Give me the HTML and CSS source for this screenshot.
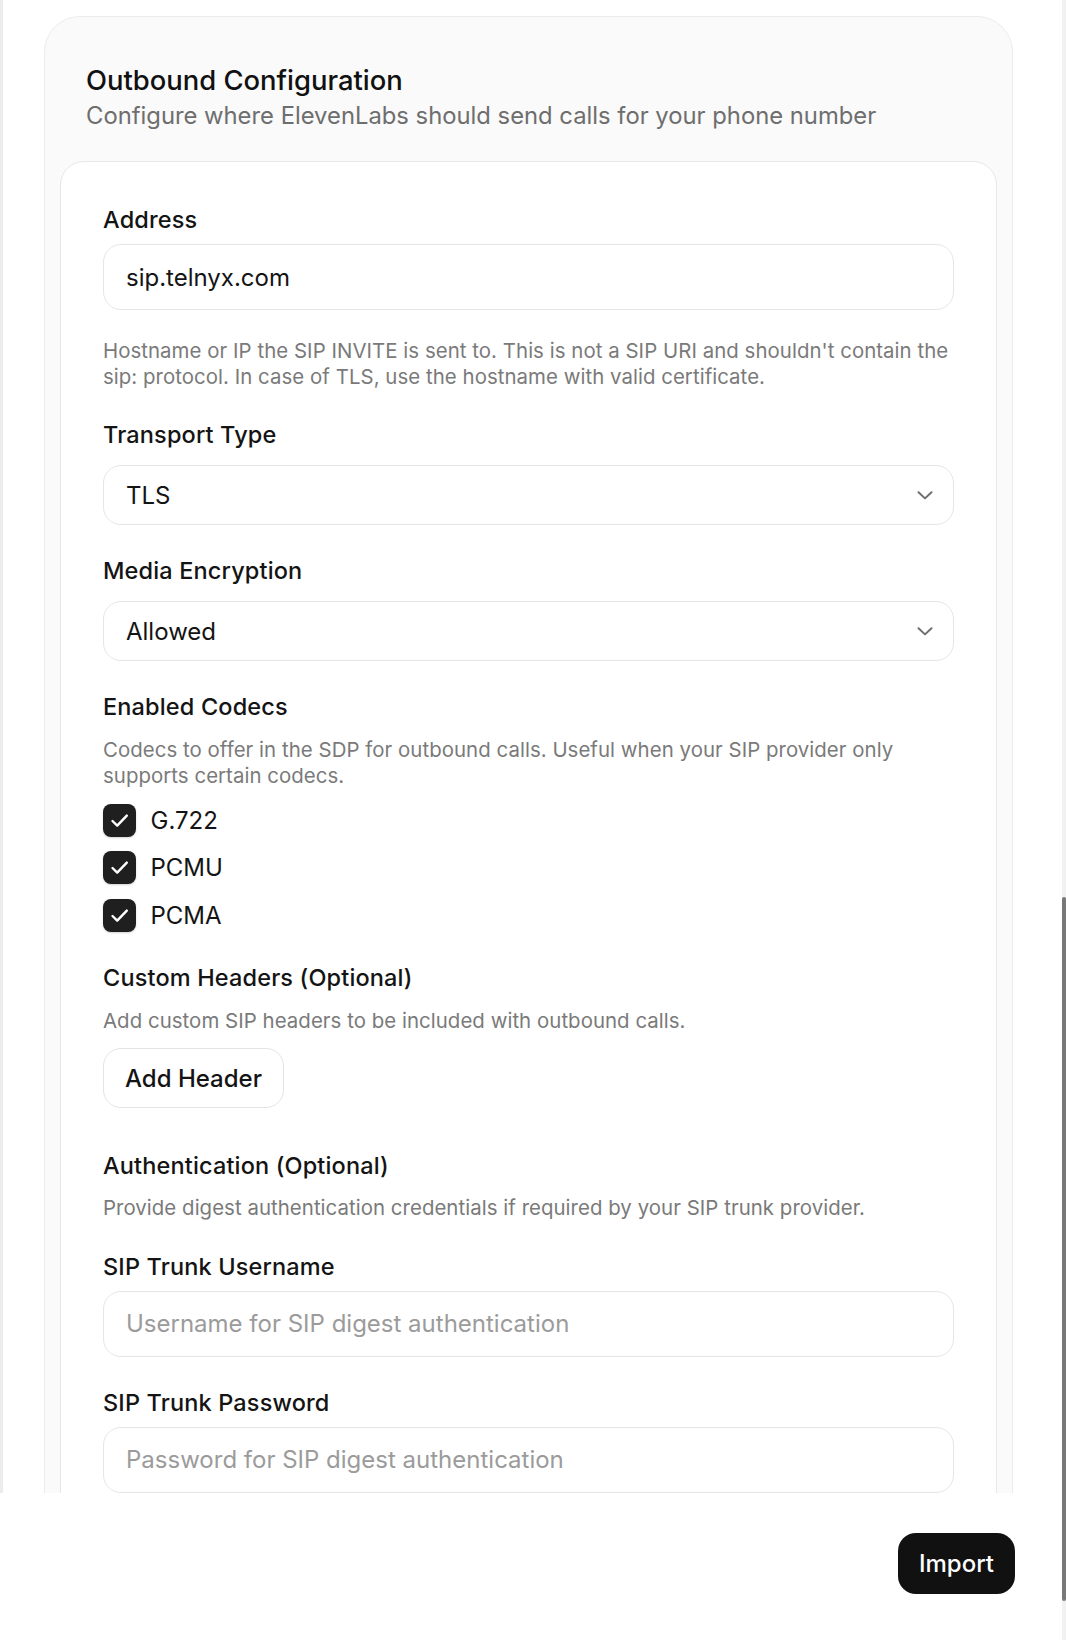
FILE: index.html
```html
<!DOCTYPE html>
<html lang="en">
<head>
<meta charset="utf-8">
<title>Outbound Configuration</title>
<link rel="stylesheet" href="styles.css">
</head>
<body>
<div class="app">
  <div class="modal">
    <div class="scroll">
      <section class="outer-card">
        <header class="card-head">
          <h2 class="title">Outbound Configuration</h2>
          <p class="subtitle">Configure where ElevenLabs should send calls for your phone number</p>
        </header>
        <div class="inner-card">
          <label class="label">Address</label>
          <input class="input gap-input" type="text" value="sip.telnyx.com">
          <p class="helper after-control">Hostname or IP the SIP INVITE is sent to. This is not a SIP URI and shouldn't contain the sip: protocol. In case of TLS, use the hostname with valid certificate.</p>

          <label class="label section">Transport Type</label>
          <button class="select gap-select" type="button"><span>TLS</span>
            <svg class="chev" width="16" height="9" viewBox="0 0 16 9"><path d="M1.5 1.2 L8 7.4 L14.5 1.2" fill="none" stroke="#6f6f6f" stroke-width="2" stroke-linecap="round" stroke-linejoin="round"/></svg>
          </button>

          <label class="label section">Media Encryption</label>
          <button class="select gap-select" type="button"><span>Allowed</span>
            <svg class="chev" width="16" height="9" viewBox="0 0 16 9"><path d="M1.5 1.2 L8 7.4 L14.5 1.2" fill="none" stroke="#6f6f6f" stroke-width="2" stroke-linecap="round" stroke-linejoin="round"/></svg>
          </button>

          <label class="label section">Enabled Codecs</label>
          <p class="helper after-label">Codecs to offer in the SDP for outbound calls. Useful when your SIP provider only supports certain codecs.</p>
          <ul class="checks">
            <li class="check-row"><span class="checkbox"><svg width="33" height="33" viewBox="0 0 33 33"><path d="M9.5 17 L14.2 21.6 L23.8 11.6" fill="none" stroke="#fff" stroke-width="2.4" stroke-linecap="round" stroke-linejoin="round"/></svg></span><span class="check-label">G.722</span></li>
            <li class="check-row"><span class="checkbox"><svg width="33" height="33" viewBox="0 0 33 33"><path d="M9.5 17 L14.2 21.6 L23.8 11.6" fill="none" stroke="#fff" stroke-width="2.4" stroke-linecap="round" stroke-linejoin="round"/></svg></span><span class="check-label">PCMU</span></li>
            <li class="check-row"><span class="checkbox"><svg width="33" height="33" viewBox="0 0 33 33"><path d="M9.5 17 L14.2 21.6 L23.8 11.6" fill="none" stroke="#fff" stroke-width="2.4" stroke-linecap="round" stroke-linejoin="round"/></svg></span><span class="check-label">PCMA</span></li>
          </ul>

          <label class="label section">Custom Headers (Optional)</label>
          <p class="helper after-label">Add custom SIP headers to be included with outbound calls.</p>
          <button class="btn-outline" type="button">Add Header</button>

          <label class="label section-lg">Authentication (Optional)</label>
          <p class="helper after-label-sm">Provide digest authentication credentials if required by your SIP trunk provider.</p>

          <label class="label section">SIP Trunk Username</label>
          <input class="input gap-input" type="text" placeholder="Username for SIP digest authentication">

          <label class="label section">SIP Trunk Password</label>
          <input class="input gap-input" type="password" placeholder="Password for SIP digest authentication">
        </div>
      </section>
    </div>
    <div class="footer">
      <button class="btn-primary" type="button">Import</button>
    </div>
  </div>
  <div class="scrollbar"><div class="thumb"></div></div>
</div>
</body>
</html>
```

FILE: styles.css
```css
* { box-sizing: border-box; }

html, body {
  margin: 0;
  padding: 0;
  background: #ffffff;
}

body {
  font-family: Inter, "Noto Sans", "Liberation Sans", sans-serif;
  color: #111111;
  width: 1066px;
  height: 1640px;
  overflow: hidden;
}

.app {
  display: flex;
  height: 1640px;
}

.modal {
  flex: 1;
  display: flex;
  flex-direction: column;
  min-width: 0;
}

.scroll {
  height: 1493px;
  overflow: hidden;
  border-left: 3px solid #ececec;
  padding: 16px 49px 0 41px;
}

.outer-card {
  background: #fafafa;
  border: 1px solid #ececec;
  border-radius: 36px;
  padding: 15px 15px 0 15px;
  min-height: 1600px;
}

.card-head {
  padding: 30px 28px 27px 26px;
}

.title {
  margin: 0;
  font-size: 27.4px;
  line-height: 36px;
  font-weight: 500;
  color: #111111;
}

.subtitle {
  margin: 0;
  font-size: 23.8px;
  line-height: 36px;
  font-weight: 400;
  color: #6e6e6e;
}

.inner-card {
  background: #ffffff;
  border: 1.5px solid #e8e8e8;
  border-radius: 24px;
  padding: 43px 42px 60px 42px;
  display: flex;
  flex-direction: column;
  align-items: stretch;
  min-height: 1500px;
}

.label {
  display: block;
  font-size: 23.5px;
  line-height: 30px;
  font-weight: 500;
  color: #141414;
  letter-spacing: 0.15px;
}

.section { margin-top: 31px; }
.section-lg { margin-top: 43px; }

.input {
  display: block;
  width: 100%;
  height: 66px;
  border: 1.5px solid #e6e6e6;
  border-radius: 18px;
  background: #ffffff;
  padding: 0 22px;
  font-family: inherit;
  font-size: 24px;
  color: #141414;
  outline: none;
}

.input::placeholder {
  color: #9b9b9b;
  opacity: 1;
}

.gap-input { margin-top: 9px; }

.select {
  display: flex;
  align-items: center;
  justify-content: space-between;
  width: 100%;
  height: 60px;
  border: 1.5px solid #e6e6e6;
  border-radius: 18px;
  background: #ffffff;
  padding: 0 20px 0 22px;
  font-family: inherit;
  font-size: 24px;
  color: #141414;
  text-align: left;
  cursor: pointer;
}

.gap-select { margin-top: 15px; }

.chev { display: block; }

.helper {
  margin: 0;
  font-size: 20.4px;
  line-height: 25.5px;
  color: #7a7a7a;
  letter-spacing: 0.05px;
}

.after-control { margin-top: 28px; }
.after-label { margin-top: 15px; }
.after-label-sm { margin-top: 14px; }

.checks {
  list-style: none;
  margin: 15.5px 0 0 0;
  padding: 0;
  display: flex;
  flex-direction: column;
  gap: 14.5px;
}

.check-row {
  display: flex;
  align-items: center;
  gap: 14.5px;
  height: 33px;
}

.checkbox {
  width: 33px;
  height: 33px;
  border-radius: 8px;
  background: #1f1f1f;
  box-shadow: 0 1px 2px rgba(0, 0, 0, 0.18);
  display: flex;
}

.check-label {
  font-size: 24px;
  line-height: 33px;
  font-weight: 400;
  color: #141414;
}

.btn-outline {
  align-self: flex-start;
  margin-top: 15px;
  height: 60px;
  padding: 0 21px;
  border: 1.5px solid #e4e4e4;
  border-radius: 18px;
  background: #ffffff;
  font-family: inherit;
  font-size: 24px;
  font-weight: 500;
  color: #141414;
  cursor: pointer;
}

.footer {
  flex: 1;
  display: flex;
  justify-content: flex-end;
  align-items: flex-start;
  padding: 40px 47px 0 0;
  background: #ffffff;
}

.btn-primary {
  height: 61px;
  padding: 0 21px;
  border: none;
  border-radius: 18px;
  background: #111111;
  color: #ffffff;
  font-family: inherit;
  font-size: 24px;
  font-weight: 500;
  cursor: pointer;
}

.scrollbar {
  width: 4px;
  background: #f1f1f1;
  padding-top: 897px;
}

.thumb {
  height: 704px;
  background: #787878;
  border-radius: 3px;
}
```
